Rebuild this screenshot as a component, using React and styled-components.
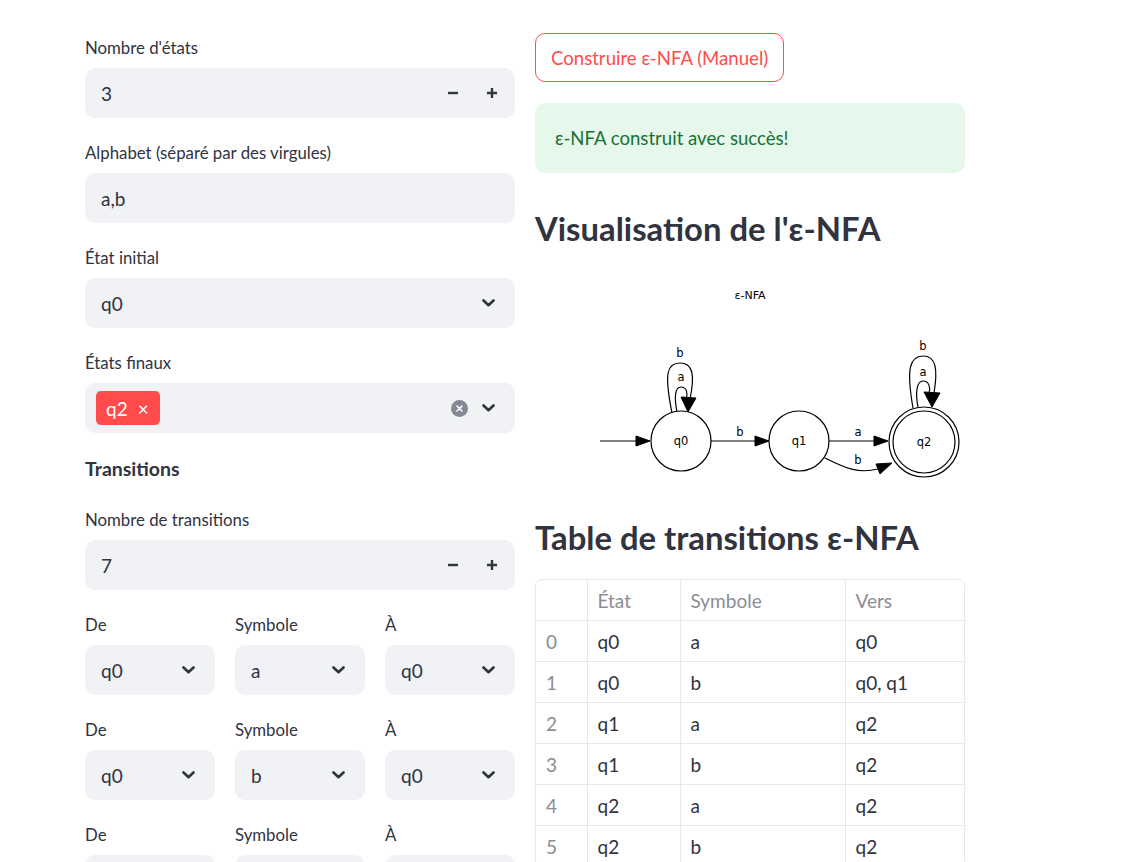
import React from "react";
import styled, { createGlobalStyle } from "styled-components";

const Global = createGlobalStyle`
  html, body { margin: 0; padding: 0; background: #ffffff; }
  body { font-family: "Lato", "Noto Sans", sans-serif; color: #31333f; }
`;

const Page = styled.div`
  display: flex;
  gap: 20px;
  padding: 33px 0 0 85px;
  width: 880px;
`;

const Column = styled.div`
  width: 430px;
  display: flex;
  flex-direction: column;
  padding-top: ${(p) => p.$offset || 0}px;
`;

const Stack = styled.div`
  display: flex;
  flex-direction: column;
  gap: 23px;
`;

const Field = styled.div`
  display: flex;
  flex-direction: column;
  min-width: 0;
`;

const Label = styled.div`
  font-size: 16.8px;
  line-height: 24px;
  height: 24px;
  margin-bottom: 8px;
  color: #31333f;
`;

const Box = styled.div`
  height: 50px;
  border-radius: 10px;
  background: #f0f2f6;
  display: flex;
  align-items: center;
  padding: 0 ${(p) => (p.$right ? p.$right : 16)}px 0 16px;
  box-sizing: border-box;
  font-size: 19px;
  color: #31333f;
`;

const Value = styled.span`
  flex: 1;
`;

const StepBtn = styled.span`
  width: 39px;
  display: flex;
  justify-content: center;
  align-items: center;
  margin-right: ${(p) => (p.$last ? "-12px" : "0")};
`;

const Tag = styled.span`
  background: #ff4b4b;
  color: #ffffff;
  border-radius: 5px;
  height: 34px;
  padding: 0 11px 0 10px;
  margin-left: -5px;
  display: inline-flex;
  align-items: center;
  gap: 10px;
  font-size: 19px;
`;

const Spacer = styled.span`
  width: ${(p) => p.$w}px;
`;

const Section = styled.div`
  font-size: 19.5px;
  font-weight: 700;
  line-height: 26px;
  padding-bottom: 3px;
`;

const Row3 = styled.div`
  display: grid;
  grid-template-columns: repeat(3, 1fr);
  gap: 20px;
`;

const OutlineButton = styled.button`
  align-self: flex-start;
  height: 49px;
  padding: 0 15px;
  border: 1px solid #ff4b4b;
  border-radius: 10px;
  background: #ffffff;
  color: #ff4b4b;
  font-family: inherit;
  font-size: 18.6px;
`;

const Success = styled.div`
  margin-top: 21px;
  height: 70px;
  border-radius: 10px;
  background: #e6f7ec;
  color: #177233;
  font-size: 18.6px;
  display: flex;
  align-items: center;
  padding: 0 20px;
  box-sizing: border-box;
`;

const Heading = styled.h2`
  margin: ${(p) => p.$mt}px 0 0;
  font-size: 32.8px;
  line-height: 44px;
  font-weight: 700;
  color: #31333f;
`;

const Graph = styled.svg`
  display: block;
  margin-top: 12px;
`;

const TableWrap = styled.div`
  margin-top: 19px;
  border: 1px solid #e6e8ed;
  border-radius: 7px;
  overflow: hidden;
`;

const Table = styled.table`
  width: 100%;
  border-collapse: collapse;
  table-layout: fixed;
  font-size: 19px;
`;

const Th = styled.th`
  height: 40px;
  font-weight: 400;
  text-align: left;
  color: #8a8c96;
  padding: 0 10px;
  border-right: 1px solid #e6e8ed;
  border-bottom: 1px solid #e6e8ed;
  &:last-child { border-right: none; }
`;

const Td = styled.td`
  height: 40px;
  padding: 0 10px;
  color: ${(p) => (p.$index ? "#8a8c96" : "#31333f")};
  border-right: 1px solid #e6e8ed;
  border-bottom: 1px solid #e6e8ed;
  &:last-child { border-right: none; }
`;

const Chevron = () => (
  <svg width="13" height="8" viewBox="0 0 13 8">
    <path d="M1.5 1.5 L6.5 6.2 L11.5 1.5" fill="none" stroke="#31333f" strokeWidth="2.6" strokeLinecap="round" strokeLinejoin="round" />
  </svg>
);

const ClearIcon = () => (
  <svg width="17" height="17" viewBox="0 0 17 17">
    <circle cx="8.5" cy="8.5" r="8.5" fill="#858895" />
    <path d="M6 6 L11 11 M11 6 L6 11" stroke="#ffffff" strokeWidth="1.6" strokeLinecap="round" />
  </svg>
);

const Minus = () => (
  <svg width="12" height="12" viewBox="0 0 12 12">
    <path d="M1 6 H11" stroke="#31333f" strokeWidth="2.4" />
  </svg>
);
const Plus = () => (
  <svg width="12" height="12" viewBox="0 0 12 12">
    <path d="M1 6 H11 M6 1 V11" stroke="#31333f" strokeWidth="2.4" />
  </svg>
);

const NumberInput = ({ label, value }) => (
  <Field>
    <Label>{label}</Label>
    <Box>
      <Value>{value}</Value>
      <StepBtn><Minus /></StepBtn>
      <StepBtn $last><Plus /></StepBtn>
    </Box>
  </Field>
);

const Select = ({ label, value }) => (
  <Field>
    <Label>{label}</Label>
    <Box $right={20}>
      <Value>{value}</Value>
      <Chevron />
    </Box>
  </Field>
);

const transitions = [
  ["q0", "a", "q0"],
  ["q0", "b", "q0"],
  ["", "", ""],
];

const tableRows = [
  ["q0", "a", "q0"],
  ["q0", "b", "q0, q1"],
  ["q1", "a", "q2"],
  ["q1", "b", "q2"],
  ["q2", "a", "q2"],
  ["q2", "b", "q2"],
];

const Arrow = ({ pts }) => <polygon points={pts} fill="#000" stroke="#000" strokeWidth="1" />;

const GLabel = ({ x, y, children, size = 11.5 }) => (
  <text x={x} y={y} fontSize={size} textAnchor="middle" fontFamily="DejaVu Sans, Verdana, sans-serif" fill="#000">
    {children}
  </text>
);

const NFAGraph = () => (
  <Graph width="430" height="230" viewBox="535 262 430 230">
    <GLabel x={750} y={298} size={11}>ε-NFA</GLabel>
    {/* q0 self loops */}
    <path d="M672 412 C664 372 667 362 680 362 C693 362 695 374 690 398" fill="none" stroke="#000" strokeWidth="1.2" />
    <path d="M677 411 C674 396 675 386 681 386 C687 386 688 393 686 398" fill="none" stroke="#000" strokeWidth="1.2" />
    <Arrow pts="681,396 696,397 688,411" />
    <GLabel x={680} y={356}>b</GLabel>
    <GLabel x={681} y={380}>a</GLabel>
    {/* q2 self loops */}
    <path d="M913 407 C906 367 910 355 923 355 C936 355 938 368 934 392" fill="none" stroke="#000" strokeWidth="1.2" />
    <path d="M918 406 C915 391 917 380 923 380 C929 380 931 387 929 392" fill="none" stroke="#000" strokeWidth="1.2" />
    <Arrow pts="924,391 940,392 932,406" />
    <GLabel x={923} y={349}>b</GLabel>
    <GLabel x={923} y={375}>a</GLabel>
    {/* start */}
    <line x1="600" y1="440" x2="636" y2="440" stroke="#000" strokeWidth="1.2" />
    <Arrow pts="636,435 650,440 636,445" />
    {/* q0 -> q1 */}
    <line x1="711" y1="440" x2="755" y2="440" stroke="#000" strokeWidth="1.2" />
    <Arrow pts="755,435 769,440 755,445" />
    <GLabel x={740} y={435}>b</GLabel>
    {/* q1 -> q2 a */}
    <line x1="829" y1="440" x2="874" y2="440" stroke="#000" strokeWidth="1.2" />
    <Arrow pts="874,435 888,440 874,445" />
    <GLabel x={858} y={435}>a</GLabel>
    {/* q1 -> q2 b */}
    <path d="M825 457 C845 467 858 473 878 468" fill="none" stroke="#000" strokeWidth="1.2" />
    <Arrow pts="876,463 892,462 880,473" />
    <GLabel x={858} y={463}>b</GLabel>
    {/* nodes */}
    <circle cx="681" cy="440" r="30" fill="#fff" stroke="#000" strokeWidth="1.2" />
    <circle cx="799" cy="440" r="30" fill="#fff" stroke="#000" strokeWidth="1.2" />
    <circle cx="924" cy="441" r="35" fill="#fff" stroke="#000" strokeWidth="1.2" />
    <circle cx="924" cy="441" r="31" fill="none" stroke="#000" strokeWidth="1.2" />
    <GLabel x={681} y={444}>q0</GLabel>
    <GLabel x={799} y={444}>q1</GLabel>
    <GLabel x={924} y={445}>q2</GLabel>
  </Graph>
);

export default function App() {
  return (
    <>
      <Global />
      <Page>
        <Column $offset={3}>
          <Stack>
            <NumberInput label="Nombre d'états" value="3" />
            <Field>
              <Label>Alphabet (séparé par des virgules)</Label>
              <Box><Value>a,b</Value></Box>
            </Field>
            <Select label="État initial" value="q0" />
            <Field>
              <Label>États finaux</Label>
              <Box $right={20}>
                <Value>
                  <Tag>q2 <span>×</span></Tag>
                </Value>
                <ClearIcon />
                <Spacer $w={14} />
                <Chevron />
              </Box>
            </Field>
            <Section>Transitions</Section>
            <NumberInput label="Nombre de transitions" value="7" />
            {transitions.map((t, i) => (
              <Row3 key={i}>
                <Select label="De" value={t[0]} />
                <Select label="Symbole" value={t[1]} />
                <Select label="À" value={t[2]} />
              </Row3>
            ))}
          </Stack>
        </Column>
        <Column>
          <OutlineButton>Construire ε-NFA (Manuel)</OutlineButton>
          <Success>ε-NFA construit avec succès!</Success>
          <Heading $mt={34}>Visualisation de l'ε-NFA</Heading>
          <NFAGraph />
          <Heading $mt={23}>Table de transitions ε-NFA</Heading>
          <TableWrap>
            <Table>
              <colgroup>
                <col style={{ width: 51 }} />
                <col style={{ width: 93 }} />
                <col style={{ width: 165 }} />
                <col />
              </colgroup>
              <thead>
                <tr>
                  <Th />
                  <Th>État</Th>
                  <Th>Symbole</Th>
                  <Th>Vers</Th>
                </tr>
              </thead>
              <tbody>
                {tableRows.map((r, i) => (
                  <tr key={i}>
                    <Td $index>{i}</Td>
                    <Td>{r[0]}</Td>
                    <Td>{r[1]}</Td>
                    <Td>{r[2]}</Td>
                  </tr>
                ))}
              </tbody>
            </Table>
          </TableWrap>
        </Column>
      </Page>
    </>
  );
}
